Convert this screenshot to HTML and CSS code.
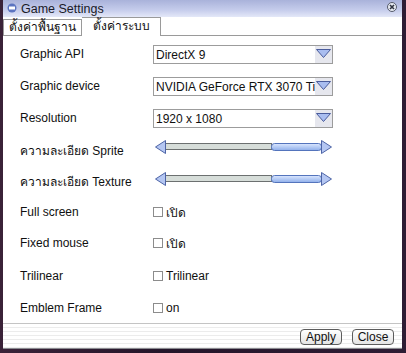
FILE: index.html
```html
<!DOCTYPE html>
<html lang="th">
<head>
    <meta charset="utf-8">
    <link rel="stylesheet" href="styles.css">
</head>
<body>
    <div class="window">
        <div class="titleBar">
            <svg class="titleIcon" width="10" height="10" viewBox="0 0 10 10">
                <circle cx="5" cy="5" r="4.5" fill="#5c74c0"/>
                <rect x="2" y="3.5" width="6" height="3" fill="#ffffff"/>
            </svg>
            <span class="titleText">Game Settings</span>
            <svg class="closeIcon" width="10" height="10" viewBox="0 0 10 10">
                <circle cx="5" cy="5" r="4.5" fill="#e8ecf4" stroke="#555a6a"/>
                <path d="M3 3 L7 7 M7 3 L3 7" stroke="#303440" stroke-width="1.6"/>
            </svg>
        </div>

        <div class="tabs">
            <div class="tab"><span class="thai">ตั้งค่าพื้นฐาน</span></div>
            <div class="tab activeTab"><span class="thai">ตั้งค่าระบบ</span></div>
            <div class="tabRest"></div>
        </div>

        <div class="settings">
            <div class="label">Graphic API</div>
            <div class="select"><span class="selectText">DirectX 9</span>
                <svg class="selectArrow" width="17" height="17" viewBox="0 0 17 17">
                    <rect width="17" height="17" fill="#e6e7ee"/>
                    <path d="M1.5 3.5 L15.5 3.5 L8.5 11.5 Z" fill="#a9bdf0" stroke="#4a5c9c"/>
                </svg>
            </div>

            <div class="label">Graphic device</div>
            <div class="select"><span class="selectText">NVIDIA GeForce RTX 3070 Ti</span>
                <svg class="selectArrow" width="17" height="17" viewBox="0 0 17 17">
                    <rect width="17" height="17" fill="#e6e7ee"/>
                    <path d="M1.5 3.5 L15.5 3.5 L8.5 11.5 Z" fill="#a9bdf0" stroke="#4a5c9c"/>
                </svg>
            </div>

            <div class="label">Resolution</div>
            <div class="select"><span class="selectText">1920 x 1080</span>
                <svg class="selectArrow" width="17" height="17" viewBox="0 0 17 17">
                    <rect width="17" height="17" fill="#e6e7ee"/>
                    <path d="M1.5 3.5 L15.5 3.5 L8.5 11.5 Z" fill="#a9bdf0" stroke="#4a5c9c"/>
                </svg>
            </div>

            <div class="label"><span class="thai">ความละเอียด</span> Sprite</div>
            <svg class="slider" width="178" height="14" viewBox="0 0 178 14">
                <defs>
                    <linearGradient id="thumbFill" x1="0" y1="0" x2="0" y2="1">
                        <stop offset="0" stop-color="#dce8ff"/>
                        <stop offset="1" stop-color="#8eaeea"/>
                    </linearGradient>
                </defs>
                <rect x="10.5" y="3.5" width="106" height="6" fill="#d6ddd9" stroke="#6c7070"/>
                <rect x="116.5" y="3.5" width="50" height="7" rx="3" fill="url(#thumbFill)" stroke="#5474bc"/>
                <path d="M0.5 7 L10.5 0.5 L10.5 13.5 Z" fill="#b4c6f2" stroke="#4e64a6"/>
                <path d="M176.5 7 L166.5 0.5 L166.5 13.5 Z" fill="#b4c6f2" stroke="#4e64a6"/>
            </svg>

            <div class="label"><span class="thai">ความละเอียด</span> Texture</div>
            <svg class="slider" width="178" height="14" viewBox="0 0 178 14">
                <rect x="10.5" y="3.5" width="106" height="6" fill="#d6ddd9" stroke="#6c7070"/>
                <rect x="116.5" y="3.5" width="50" height="7" rx="3" fill="url(#thumbFill)" stroke="#5474bc"/>
                <path d="M0.5 7 L10.5 0.5 L10.5 13.5 Z" fill="#b4c6f2" stroke="#4e64a6"/>
                <path d="M176.5 7 L166.5 0.5 L166.5 13.5 Z" fill="#b4c6f2" stroke="#4e64a6"/>
            </svg>

            <div class="label">Full screen</div>
            <div class="check"><span class="box"></span><span class="thai">เปิด</span></div>

            <div class="label">Fixed mouse</div>
            <div class="check"><span class="box"></span><span class="thai">เปิด</span></div>

            <div class="label">Trilinear</div>
            <div class="check"><span class="box"></span>Trilinear</div>

            <div class="label">Emblem Frame</div>
            <div class="check"><span class="box"></span>on</div>
        </div>

        <div class="footer">
            <button class="button">Apply</button>
            <button class="button">Close</button>
        </div>
    </div>
</body>
</html>
```

FILE: styles.css
```css
body {
    margin: 0;
    width: 406px;
    height: 353px;
    overflow: hidden;
    background: linear-gradient(90deg, #3a2238, #24162a 40%, #2e1c34);
    font-family: "Liberation Sans", "Noto Sans", sans-serif;
    font-size: 12px;
    color: #101010;
}

.thai {
    font-size: 12px;
}

.window {
    margin-left: 3px;
    width: 399px;
    height: 349px;
    background-color: #ffffff;
    display: flex;
    flex-direction: column;
    border-bottom: 1px solid #8a8a90;
    box-sizing: border-box;
}

.titleBar {
    height: 18px;
    display: flex;
    align-items: center;
    padding: 0 5px 0 4px;
    background: linear-gradient(#a9b2da, #c6cdec 60%, #e4e8f8);
}

.titleIcon {
    margin-right: 4px;
    margin-top: -1px;
}

.titleText {
    flex: 1;
    font-size: 12.5px;
    color: #1a1a28;
}

.closeIcon {
    margin-top: -3px;
}

.tabs {
    height: 19px;
    display: flex;
    align-items: flex-end;
}

.tab {
    width: 79px;
    height: 17px;
    border: 1px solid #9a9a9a;
    box-sizing: border-box;
    text-align: center;
    line-height: 15px;
    color: #101010;
}

.activeTab {
    width: 79px;
    height: 19px;
    border-left: none;
    border-bottom: none;
    line-height: 17px;
}

.tabRest {
    flex: 1;
    border-bottom: 1px solid #9a9a9a;
}

.settings {
    flex: 1;
    display: grid;
    grid-template-columns: 133px 180px;
    grid-template-rows: 32px 32px 32px 32px 31px 30px 32px 33px 31px;
    align-items: center;
    padding: 2px 0 0 17px;
}

.label {
    white-space: nowrap;
}

.select {
    height: 19px;
    border: 1px solid #9c9c9c;
    box-sizing: border-box;
    display: flex;
    align-items: center;
    position: relative;
    overflow: hidden;
}

.selectText {
    padding-left: 2px;
    padding-top: 2px;
    white-space: nowrap;
}

.selectArrow {
    position: absolute;
    right: 0;
    top: 0;
}

.slider {
    align-self: start;
    margin-top: 6px;
    margin-left: 2px;
}

.check {
    display: flex;
    align-items: center;
}

.box {
    width: 10px;
    height: 10px;
    border: 1px solid #8c8c8c;
    box-sizing: border-box;
    margin-right: 3px;
}

.footer {
    height: 26px;
    border-top: 1px solid #c4c4c4;
    display: flex;
    justify-content: flex-end;
    align-items: flex-start;
    gap: 10px;
    padding: 5px 8px 0 0;
    box-sizing: border-box;
    background: repeating-linear-gradient(#ffffff 0, #ffffff 3px, #ececec 3px, #ececec 4px);
}

.button {
    width: 42px;
    height: 16px;
    padding: 0;
    border: 1px solid #5c5c5c;
    border-radius: 4px;
    background: linear-gradient(#ffffff, #e4e4e4);
    font-family: "Liberation Sans", "Noto Sans", sans-serif;
    font-size: 12px;
    color: #101010;
    line-height: 14px;
}
```
